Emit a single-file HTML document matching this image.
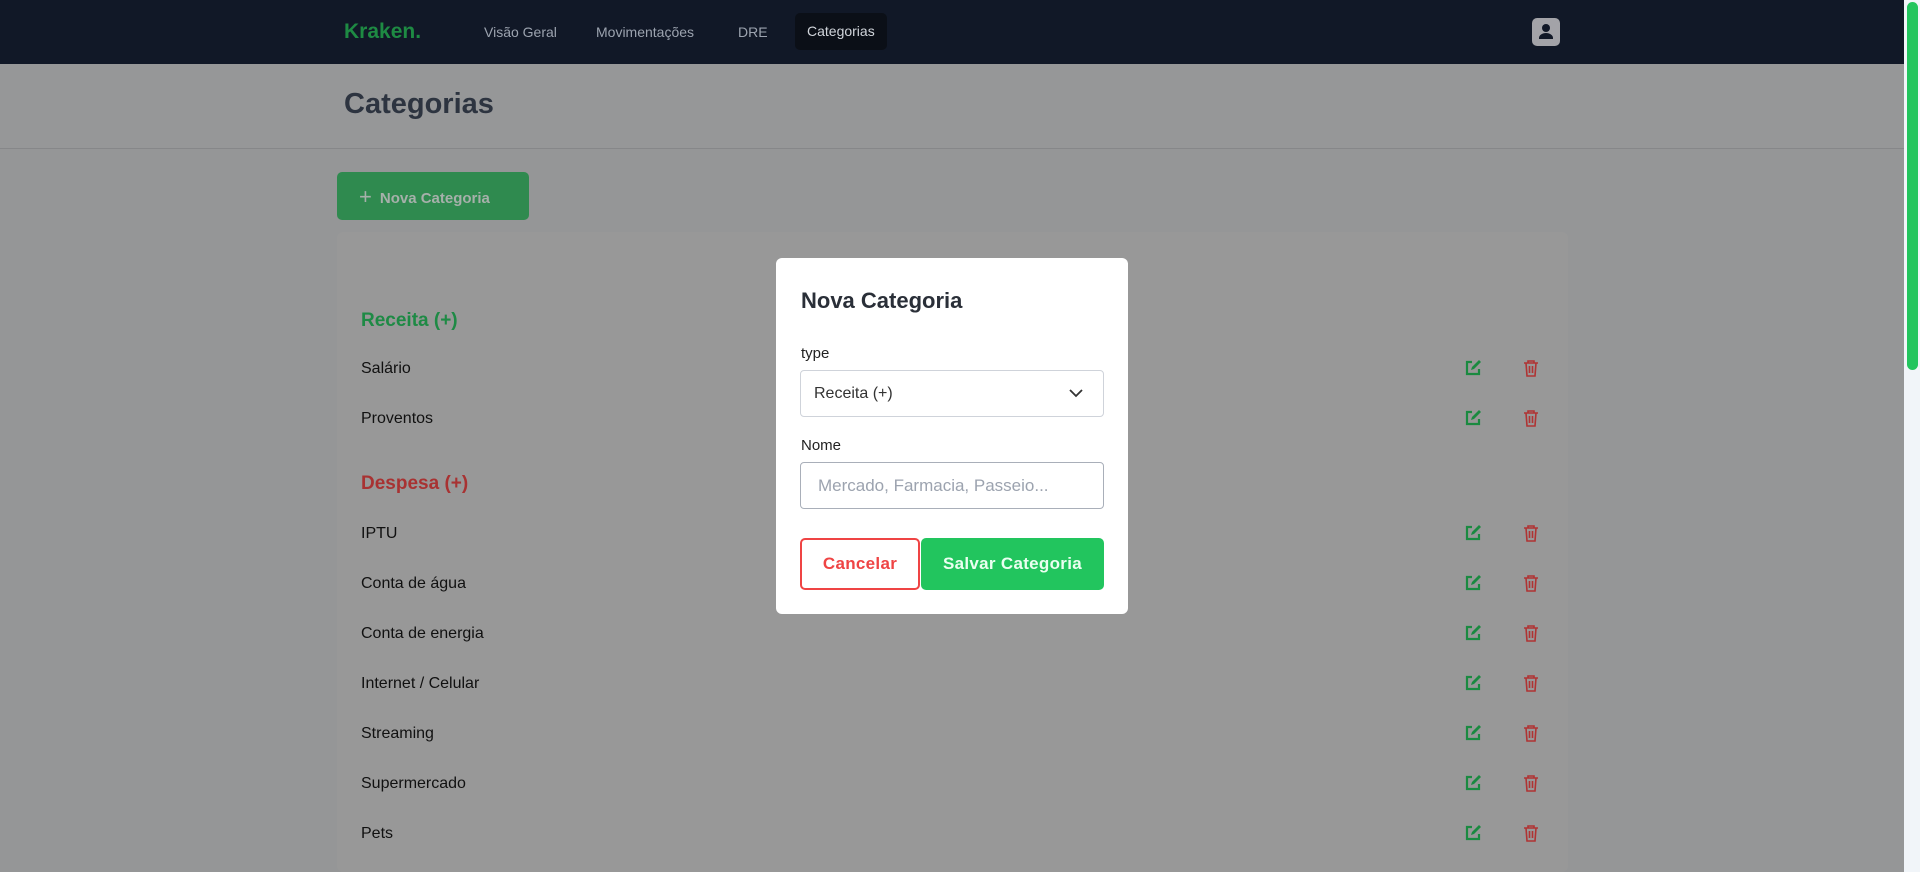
<!DOCTYPE html>
<html style="overflow:hidden;height:872px"><head><meta charset="utf-8"><style>
*{box-sizing:border-box;margin:0;padding:0}
html,body{overflow:hidden}
body{width:1920px;height:872px;background:#959697;font-family:"Liberation Sans",sans-serif;position:relative}
.nav{position:absolute;left:0;top:0;width:1904px;height:64px;background:#111827}
.nav span{position:absolute;top:0;line-height:64px;font-size:14px;color:#9ca3af}
.logo{left:344px;color:#1e8a43!important;font-weight:bold;font-size:21px!important}
.active{background:#0b0f17;border-radius:5px;top:13px!important;height:37px;line-height:37px!important;padding:0 12px;color:#d1d5db!important}
.av{position:absolute;left:1532px;top:18px;width:28px;height:28px;background:#a3a3a8;border-radius:5px}
.hdr{position:absolute;left:0;top:64px;width:1904px;height:85px;border-bottom:1px solid #868789;background:#969798}
.hdr h1{position:absolute;left:344px;top:24px;font-size:29px;color:#2d3440;font-weight:bold}
.btn{position:absolute;left:337px;top:172px;width:192px;height:48px;background:#2f8a4f;border-radius:5px;color:#a6b0aa;font-weight:bold;font-size:15px;line-height:48px;padding-left:22px}
.card{position:absolute;left:337px;top:232px;width:1231px;height:640px;background:#989898;border-radius:6px}
.t{position:absolute;left:361px;font-size:16px;color:#111;transform:translateY(-50%)}
.h{font-weight:bold;font-size:19px}
.ic{position:absolute;transform:translateY(-50%)}
.sb{position:absolute;left:1904px;top:0;width:16px;height:872px;background:#f1f5f9}
.sb div{position:absolute;left:3px;top:2px;width:11px;height:368px;background:#22c55e;border-radius:6px}
.modal{position:absolute;left:776px;top:258px;width:352px;height:356px;background:#fff;border-radius:6px}
.modal h2{position:absolute;left:25px;top:30px;font-size:22px;font-weight:600;color:#2a2f38}
.lb{position:absolute;left:25px;font-size:15px;color:#222}
.box{position:absolute;left:24px;width:304px;height:47px;border:1px solid #cfd3da;border-radius:4px;font-size:16px;line-height:45px;padding-left:13px}
.cb{position:absolute;top:280px;height:52px;border-radius:5px;font-weight:bold;font-size:17px;line-height:52px;text-align:center;letter-spacing:.3px}
</style></head><body>
<div class="nav">
<span class="logo">Kraken.</span>
<span style="left:484px">Visão Geral</span>
<span style="left:596px">Movimentações</span>
<span style="left:738px">DRE</span>
<span class="active" style="left:795px">Categorias</span>
<div class="av"><svg width="28" height="28" viewBox="0 0 28 28"><circle cx="14" cy="10" r="4" fill="#111827"/><path d="M7 20a7 5 0 0 1 14 0v1H7z" fill="#111827"/></svg></div>
</div>
<div class="hdr"><h1>Categorias</h1></div>
<div class="btn"><span style="font-weight:normal;font-size:22px;position:relative;top:1px;margin-right:8px">+</span>Nova Categoria</div>
<div class="card"></div>
<div class="t h" style="top:321px;color:#1e8a45">Receita (+)</div>
<div class="t" style="top:369px">Salário</div>
<div class="t" style="top:419px">Proventos</div>
<div class="t h" style="top:484px;color:#a83232">Despesa (+)</div>
<div class="t" style="top:534px">IPTU</div>
<div class="t" style="top:584px">Conta de água</div>
<div class="t" style="top:634px">Conta de energia</div>
<div class="t" style="top:684px">Internet / Celular</div>
<div class="t" style="top:734px">Streaming</div>
<div class="t" style="top:784px">Supermercado</div>
<div class="t" style="top:834px">Pets</div>
<div id="icons"></div>
<div class="sb"><div></div></div>
<div class="modal">
<h2>Nova Categoria</h2>
<div class="lb" style="top:87px">type</div>
<div class="box" style="top:112px;color:#333">Receita (+)<svg style="position:absolute;right:20px;top:17px" width="14" height="10" viewBox="0 0 14 10"><path d="M1 2l6 6 6-6" stroke="#333" stroke-width="1.8" fill="none"/></svg></div>
<div class="lb" style="top:179px">Nome</div>
<div class="box" style="top:204px;color:#9ca3af;border-color:#a9afb9;padding-left:17px;font-size:17px">Mercado, Farmacia, Passeio...</div>
<div class="cb" style="left:24px;width:120px;border:2px solid #ef4444;color:#ef4444;line-height:48px">Cancelar</div>
<div class="cb" style="left:145px;width:183px;background:#22c55e;color:#eafff0">Salvar Categoria</div>
</div>
<script>
var ys=[369,419,534,584,634,684,734,784,834],h='';
ys.forEach(function(y){
h+='<svg class="ic" style="left:1464px;top:'+(y-1)+'px" width="18" height="18" viewBox="0 0 18 18"><path d="M8 3H3v12h12v-5" stroke="#1a8a40" stroke-width="2.2" fill="none"/><path d="M7 11l1-3 7-7 2 2-7 7z" fill="#1a8a40"/></svg>';
h+='<svg class="ic" style="left:1523px;top:'+(y-1)+'px" width="16" height="18" viewBox="0 0 16 18"><path d="M1 4h14M5 4V2h6v2M3 4l1 13h8l1-13M6.5 7v7M9.5 7v7" stroke="#b03333" stroke-width="1.6" fill="none"/></svg>';
});
document.getElementById('icons').innerHTML=h;
</script>
</body></html>
